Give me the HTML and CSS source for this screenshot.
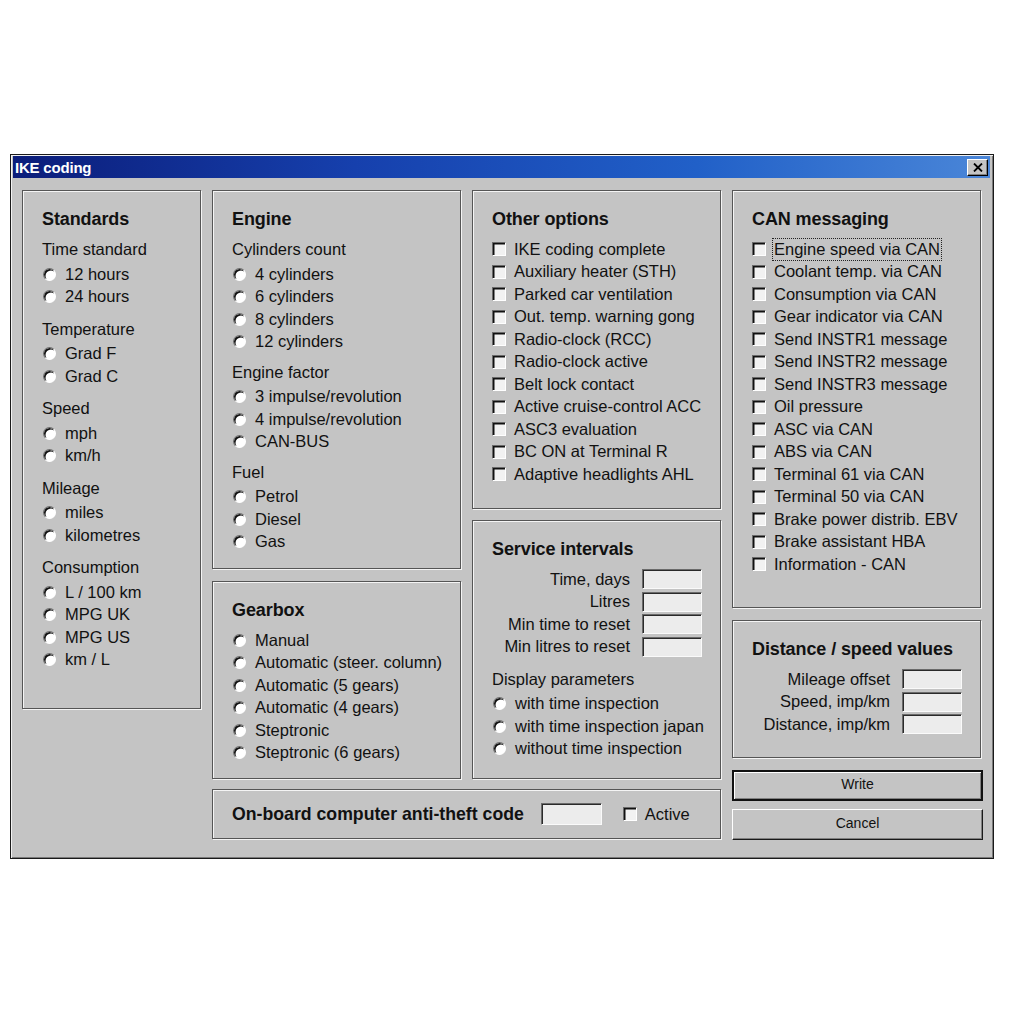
FILE: index.html
```html
<!DOCTYPE html>
<html>
<head>
<meta charset="utf-8">
<title>IKE coding</title>
<link rel="stylesheet" href="styles.css">
</head>
<body>
<div class="window">
  <div class="titlebar">
    <span class="title">IKE coding</span>
    <span class="close"><svg viewBox="0 0 10 9" width="10" height="9"><path d="M1 0.5 L9 8.5 M9 0.5 L1 8.5" stroke="#000" stroke-width="1.8"/></svg></span>
  </div>
  <div class="client">
    <section class="panel standards">
      <h2>Standards</h2>
      <div class="group">
        <div class="glabel">Time standard</div>
        <div class="item"><span class="radio"></span>12 hours</div>
        <div class="item"><span class="radio"></span>24 hours</div>
      </div>
      <div class="group">
        <div class="glabel">Temperature</div>
        <div class="item"><span class="radio"></span>Grad F</div>
        <div class="item"><span class="radio"></span>Grad C</div>
      </div>
      <div class="group">
        <div class="glabel">Speed</div>
        <div class="item"><span class="radio"></span>mph</div>
        <div class="item"><span class="radio"></span>km/h</div>
      </div>
      <div class="group">
        <div class="glabel">Mileage</div>
        <div class="item"><span class="radio"></span>miles</div>
        <div class="item"><span class="radio"></span>kilometres</div>
      </div>
      <div class="group">
        <div class="glabel">Consumption</div>
        <div class="item"><span class="radio"></span>L / 100 km</div>
        <div class="item"><span class="radio"></span>MPG UK</div>
        <div class="item"><span class="radio"></span>MPG US</div>
        <div class="item"><span class="radio"></span>km / L</div>
      </div>
    </section>

    <div class="middle">
      <div class="middle-cols">
        <div class="col">
          <section class="panel engine">
            <h2>Engine</h2>
            <div class="group tight">
              <div class="glabel">Cylinders count</div>
              <div class="item"><span class="radio"></span>4 cylinders</div>
              <div class="item"><span class="radio"></span>6 cylinders</div>
              <div class="item"><span class="radio"></span>8 cylinders</div>
              <div class="item"><span class="radio"></span>12 cylinders</div>
            </div>
            <div class="group tight">
              <div class="glabel">Engine factor</div>
              <div class="item"><span class="radio"></span>3 impulse/revolution</div>
              <div class="item"><span class="radio"></span>4 impulse/revolution</div>
              <div class="item"><span class="radio"></span>CAN-BUS</div>
            </div>
            <div class="group tight">
              <div class="glabel">Fuel</div>
              <div class="item"><span class="radio"></span>Petrol</div>
              <div class="item"><span class="radio"></span>Diesel</div>
              <div class="item"><span class="radio"></span>Gas</div>
            </div>
          </section>
          <section class="panel gearbox">
            <h2>Gearbox</h2>
            <div class="item"><span class="radio"></span>Manual</div>
            <div class="item"><span class="radio"></span>Automatic (steer. column)</div>
            <div class="item"><span class="radio"></span>Automatic (5 gears)</div>
            <div class="item"><span class="radio"></span>Automatic (4 gears)</div>
            <div class="item"><span class="radio"></span>Steptronic</div>
            <div class="item"><span class="radio"></span>Steptronic (6 gears)</div>
          </section>
        </div>
        <div class="col">
          <section class="panel other">
            <h2>Other options</h2>
            <div class="item"><span class="check"></span>IKE coding complete</div>
            <div class="item"><span class="check"></span>Auxiliary heater (STH)</div>
            <div class="item"><span class="check"></span>Parked car ventilation</div>
            <div class="item"><span class="check"></span>Out. temp. warning gong</div>
            <div class="item"><span class="check"></span>Radio-clock (RCC)</div>
            <div class="item"><span class="check"></span>Radio-clock active</div>
            <div class="item"><span class="check"></span>Belt lock contact</div>
            <div class="item"><span class="check"></span>Active cruise-control ACC</div>
            <div class="item"><span class="check"></span>ASC3 evaluation</div>
            <div class="item"><span class="check"></span>BC ON at Terminal R</div>
            <div class="item"><span class="check"></span>Adaptive headlights AHL</div>
          </section>
          <section class="panel service">
            <h2>Service intervals</h2>
            <div class="field"><span>Time, days</span><span class="input"></span></div>
            <div class="field"><span>Litres</span><span class="input"></span></div>
            <div class="field"><span>Min time to reset</span><span class="input"></span></div>
            <div class="field"><span>Min litres to reset</span><span class="input"></span></div>
            <div class="group">
              <div class="glabel">Display parameters</div>
              <div class="item"><span class="radio"></span>with time inspection</div>
              <div class="item"><span class="radio"></span>with time inspection japan</div>
              <div class="item"><span class="radio"></span>without time inspection</div>
            </div>
          </section>
        </div>
      </div>
      <section class="panel antitheft">
        <span class="bold">On-board computer anti-theft code</span>
        <span class="input code"></span>
        <span class="item inline"><span class="check"></span>Active</span>
      </section>
    </div>

    <div class="col right">
      <section class="panel can">
        <h2>CAN messaging</h2>
        <div class="item"><span class="check"></span><span class="focus">Engine speed via CAN</span></div>
        <div class="item"><span class="check"></span>Coolant temp. via CAN</div>
        <div class="item"><span class="check"></span>Consumption via CAN</div>
        <div class="item"><span class="check"></span>Gear indicator via CAN</div>
        <div class="item"><span class="check"></span>Send INSTR1 message</div>
        <div class="item"><span class="check"></span>Send INSTR2 message</div>
        <div class="item"><span class="check"></span>Send INSTR3 message</div>
        <div class="item"><span class="check"></span>Oil pressure</div>
        <div class="item"><span class="check"></span>ASC via CAN</div>
        <div class="item"><span class="check"></span>ABS via CAN</div>
        <div class="item"><span class="check"></span>Terminal 61 via CAN</div>
        <div class="item"><span class="check"></span>Terminal 50 via CAN</div>
        <div class="item"><span class="check"></span>Brake power distrib. EBV</div>
        <div class="item"><span class="check"></span>Brake assistant HBA</div>
        <div class="item"><span class="check"></span>Information - CAN</div>
      </section>
      <section class="panel distance">
        <h2>Distance / speed values</h2>
        <div class="field"><span>Mileage offset</span><span class="input"></span></div>
        <div class="field"><span>Speed, imp/km</span><span class="input"></span></div>
        <div class="field"><span>Distance, imp/km</span><span class="input"></span></div>
      </section>
      <button class="btn default">Write</button>
      <button class="btn">Cancel</button>
    </div>
  </div>
</div>
</body>
</html>
```

FILE: styles.css
```css
html, body {
  margin: 0;
  padding: 0;
  background: #ffffff;
}

body {
  font-family: "Liberation Sans", Arial, sans-serif;
  color: #111;
}

.window {
  box-sizing: border-box;
  margin: 154px 0 0 10px;
  width: 984px;
  height: 705px;
  background: #c4c4c4;
  border: 1px solid #1a1a1a;
  box-shadow: inset 1px 1px 0 #f2f2f2, inset -1px -1px 0 #7a7a7a;
  padding: 1px 3px 2px 2px;
  display: flex;
  flex-direction: column;
}

.titlebar {
  height: 22px;
  flex: none;
  background: linear-gradient(to right, #0b1d7a 0%, #1640ad 35%, #2160c8 70%, #4a86d8 100%);
  display: flex;
  align-items: center;
  justify-content: space-between;
  padding: 0 2px 0 2px;
}

.title {
  color: #fff;
  font-weight: bold;
  font-size: 15px;
  letter-spacing: -0.2px;
}

.close {
  box-sizing: border-box;
  width: 21px;
  height: 17px;
  background: #c4c4c4;
  border: 1px solid;
  border-color: #fff #000 #000 #fff;
  box-shadow: inset -1px -1px 0 #808080;
  display: flex;
  align-items: center;
  justify-content: center;
}

.client {
  display: flex;
  gap: 11px;
  padding: 12px 0 0 9px;
}

.col {
  display: flex;
  flex-direction: column;
  width: 249px;
}

.panel {
  box-sizing: border-box;
  border: 1px solid #555;
  box-shadow: inset 1px 1px 0 #f4f4f4, 1px 1px 0 #f4f4f4;
  padding: 17px 10px 0 19px;
  font-size: 16.5px;
}

.panel h2 {
  margin: 0 0 8px 0;
  font-size: 18px;
  font-weight: bold;
  line-height: 22px;
  letter-spacing: -0.1px;
}

.glabel {
  line-height: 22.5px;
  margin-bottom: 2.5px;
}

.group + .group {
  margin-top: 9.5px;
}

.group.tight + .group.tight {
  margin-top: 7.5px;
}

.item {
  display: flex;
  align-items: center;
  height: 22.5px;
  white-space: nowrap;
}

.radio {
  box-sizing: border-box;
  flex: none;
  width: 13px;
  height: 13px;
  border-radius: 50%;
  border: 1px solid;
  border-color: #6a6a6a #ffffff #ffffff #6a6a6a;
  background: #fff;
  box-shadow: inset 1.5px 1.5px 0 #111;
  margin: 0 9px 0 1px;
}

.check {
  box-sizing: border-box;
  flex: none;
  width: 14px;
  height: 14px;
  border: 1px solid;
  border-color: #6a6a6a #ffffff #ffffff #6a6a6a;
  background: #f2f2f2;
  box-shadow: inset 1.5px 1.5px 0 #111;
  margin-right: 8px;
}

.focus {
  outline: 1px dotted #222;
  outline-offset: 1px;
}

.standards {
  width: 179px;
  height: 519px;
}

.middle {
  display: flex;
  flex-direction: column;
  gap: 10px;
  width: 509px;
}

.middle-cols {
  display: flex;
  gap: 11px;
}

.engine { height: 379px; }
.gearbox { height: 198px; margin-top: 12px; }
.other { height: 319px; }
.service { height: 259px; margin-top: 11px; padding-right: 18px; }

.field {
  display: flex;
  justify-content: flex-end;
  align-items: center;
  height: 22.5px;
  white-space: nowrap;
}

.field .input {
  margin-left: 12px;
}

.input {
  box-sizing: border-box;
  display: inline-block;
  width: 60px;
  height: 20px;
  border: 1px solid;
  border-color: #6a6a6a #fafafa #fafafa #6a6a6a;
  box-shadow: inset 1px 1px 0 #2a2a2a;
  background: #ececec;
}

.service .group {
  margin-top: 9.5px;
}

.antitheft {
  height: 50px;
  display: flex;
  align-items: center;
  padding-top: 0;
}

.bold {
  font-weight: bold;
  font-size: 17.7px;
  letter-spacing: 0;
}

.input.code {
  width: 61px;
  height: 22px;
  margin-left: 17px;
}

.item.inline {
  margin-left: 21px;
}

.right {
  width: 251px;
}

.can {
  width: 249px;
  height: 418px;
}

.distance {
  width: 249px;
  height: 138px;
  margin-top: 12px;
  padding-right: 18px;
}

.btn {
  box-sizing: border-box;
  height: 31px;
  width: 251px;
  font-family: "Liberation Sans", Arial, sans-serif;
  font-size: 14px;
  line-height: 14px;
  color: #111;
  background: #c4c4c4;
  border: 1px solid;
  border-color: #fff #1a1a1a #1a1a1a #fff;
  box-shadow: inset -1px -1px 0 #808080;
  padding: 0 0 3px 0;
  margin-top: 8px;
}

.btn.default {
  margin-top: 12px;
  border: 2px solid #111;
  box-shadow: inset 1px 1px 0 #fff, inset -1px -1px 0 #808080;
}
```
